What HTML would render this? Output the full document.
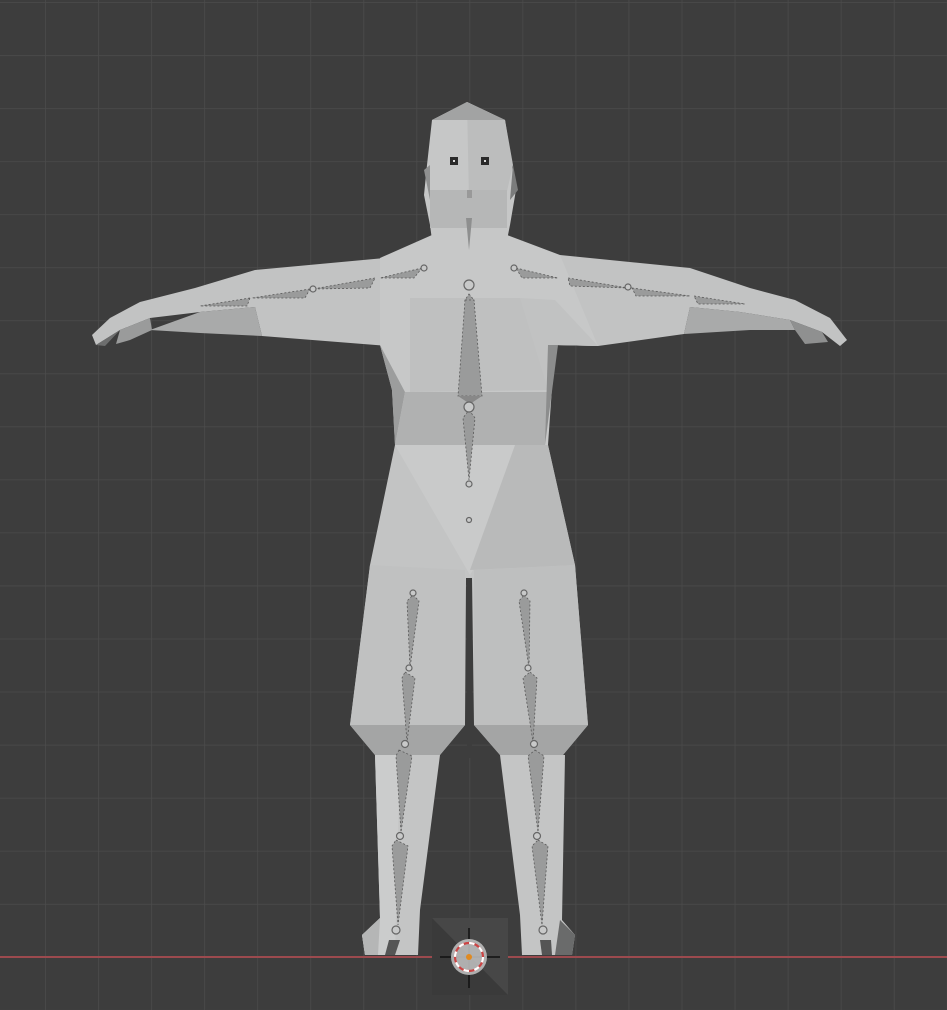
<!DOCTYPE html>
<html><head><style>
html,body{margin:0;padding:0;background:#3d3d3d;overflow:hidden}
svg{display:block}
</style></head><body>
<svg width="947" height="1010" viewBox="0 0 947 1010" xmlns="http://www.w3.org/2000/svg">
<defs>
<pattern id="g" x="45" y="2" width="53.05" height="53.05" patternUnits="userSpaceOnUse">
<path d="M0 0H53.05M0 0V53.05" stroke="#4b4b4b" stroke-width="1.6" fill="none"/>
</pattern>
</defs>
<rect width="947" height="1010" fill="#3d3d3d"/>
<rect width="947" height="1010" fill="url(#g)"/>
<line x1="0" y1="957" x2="947" y2="957" stroke="#9c4a4e" stroke-width="2"/>

<!-- arms -->
<polygon points="385,258 255,270 195,288 140,302 110,318 92,335 96,345 120,330 150,318 200,312 255,307 262,336 388,346" fill="#c2c3c3"/>
<polygon points="200,312 255,307 262,336 200,333 150,330" fill="#a9aaaa"/>
<polygon points="120,330 150,318 152,330 130,340 116,344" fill="#9a9b9b"/>
<polygon points="96,345 120,330 105,346" fill="#6d6e6e"/>
<polygon points="560,255 690,268 750,288 795,300 830,318 847,340 840,346 822,332 790,320 740,312 690,307 684,334 598,346 555,345" fill="#c2c3c3"/>
<polygon points="690,307 740,312 790,320 795,330 750,330 684,334" fill="#a9aaaa"/>
<polygon points="790,320 822,332 828,342 805,344 795,330" fill="#8f9090"/>

<!-- torso -->
<polygon points="380,258 432,235 507,235 560,255 598,346 555,345 548,445 395,445 392,390 380,345" fill="#c7c8c8"/>
<polygon points="410,298 520,298 540,340 548,390 410,392" fill="#bfc0c0"/>
<polygon points="520,298 555,300 598,346 555,345 548,390" fill="#c1c2c2"/>
<polygon points="380,345 392,390 395,445 405,392" fill="#9c9d9d"/>
<polygon points="405,392 548,392 545,445 395,445" fill="#b0b1b1"/>
<polygon points="548,345 558,345 545,445" fill="#8c8d8d"/>

<!-- head -->
<polygon points="467,102 432,120 427,165 424,195 430,225 432,240 507,240 510,225 516,190 505,120" fill="#c6c7c7"/>
<polygon points="467,102 505,120 513,165 505,200 469,200" fill="#bcbdbd"/>
<polygon points="467,102 432,120 505,120" fill="#a2a3a3"/>
<polygon points="430,190 507,190 507,228 430,228" fill="#b6b7b7"/>
<polygon points="424,170 430,165 430,200" fill="#8f9090"/>
<polygon points="513,165 518,190 510,200" fill="#7b7c7c"/>
<rect x="450" y="157" width="8" height="8" fill="#2a2a2a"/><rect x="453" y="160" width="2" height="2" fill="#ddd"/>
<rect x="481" y="157" width="8" height="8" fill="#2a2a2a"/><rect x="484" y="160" width="2" height="2" fill="#ddd"/>

<!-- hips / legs -->
<polygon points="395,445 548,445 575,565 588,725 563,755 500,755 474,725 472,578 466,578 465,725 440,755 375,755 350,725 370,565" fill="#c3c4c4"/>
<polygon points="395,445 548,445 470,575" fill="#c9caca"/>
<polygon points="515,445 548,445 575,565 470,570" fill="#b9baba"/>
<polygon points="370,565 465,570 465,725 350,725" fill="#c0c1c1"/>
<polygon points="474,570 575,565 588,725 474,725" fill="#bebfbf"/>
<polygon points="350,725 465,725 440,755 375,755" fill="#a4a5a5"/>
<polygon points="474,725 588,725 563,755 500,755" fill="#a4a5a5"/>
<rect x="467" y="578" width="5" height="180" fill="#3d3d3d"/>
<!-- lower legs -->
<polygon points="375,755 440,755 420,910 418,955 365,955 362,935 380,918" fill="#c4c5c5"/>
<polygon points="375,755 400,755 395,955 365,955 362,935 380,918" fill="#cbcccc"/>
<polygon points="500,755 565,755 562,920 575,935 572,955 522,955 520,915" fill="#c4c5c5"/>
<polygon points="560,920 575,935 572,955 555,955" fill="#6a6b6b"/>
<polygon points="362,935 380,918 378,955 365,955" fill="#b5b6b6"/>

<!-- bones -->
<g fill="#9a9b9b" stroke="#5a5a5a" stroke-width="0.8" stroke-dasharray="2 2">
<polygon points="469,294 474,300 470,395 465,300"/>
<polygon points="465,300 474,300 482,396 458,396"/>
<polygon points="469,410 475,418 469,480 463,418"/>
<polygon points="413,595 419,601 410,668 407,601"/>
<polygon points="405,672 415,678 407,742 402,678"/>
<polygon points="399,750 412,756 401,832 396,756"/>
<polygon points="396,840 408,846 398,925 392,846"/>
<polygon points="524,595 530,601 529,668 519,601"/>
<polygon points="530,672 537,678 533,742 523,678"/>
<polygon points="535,750 544,756 538,832 528,756"/>
<polygon points="538,840 548,846 542,925 532,846"/>
<polygon points="422,268 380,278 414,278"/>
<polygon points="375,278 313,289 370,288"/>
<polygon points="310,289 252,298 305,298"/>
<polygon points="250,298 200,306 247,306"/>
<polygon points="516,268 558,278 522,278"/>
<polygon points="568,278 628,288 570,286"/>
<polygon points="632,288 690,296 636,296"/>
<polygon points="694,296 745,304 698,304"/>
</g>
<polygon points="458,396 482,396 470,404" fill="#888"/>
<g fill="#c8c9c9" stroke="#666" stroke-width="1.2">
<circle cx="469" cy="285" r="5"/><circle cx="469" cy="407" r="5"/>
<circle cx="469" cy="484" r="3"/><circle cx="469" cy="520" r="2.5"/>
<circle cx="413" cy="593" r="3"/><circle cx="409" cy="668" r="3"/><circle cx="405" cy="744" r="3.5"/><circle cx="400" cy="836" r="3.5"/>
<circle cx="524" cy="593" r="3"/><circle cx="528" cy="668" r="3"/><circle cx="534" cy="744" r="3.5"/><circle cx="537" cy="836" r="3.5"/>
<circle cx="424" cy="268" r="3"/><circle cx="514" cy="268" r="3"/><circle cx="313" cy="289" r="3"/><circle cx="628" cy="287" r="3"/>
<circle cx="396" cy="930" r="4"/><circle cx="543" cy="930" r="4"/>
</g>
<polygon points="389,940 400,940 395,955 385,955" fill="#555"/>
<polygon points="540,940 551,940 552,955 542,955" fill="#555"/>
<rect x="467" y="190" width="5" height="8" fill="#999"/>
<polygon points="466,218 472,218 469,250" fill="#8e8f8f"/>

<!-- origin gizmo -->
<rect x="432" y="918" width="76" height="77" fill="#3a3a3a"/>
<polygon points="432,918 508,918 508,995" fill="#474747"/>
<line x1="440" y1="957" x2="500" y2="957" stroke="#111" stroke-width="1.5"/>
<line x1="469" y1="928" x2="469" y2="988" stroke="#111" stroke-width="1.5"/>
<circle cx="469" cy="957" r="18" fill="#bdbdbd" opacity="0.9"/>
<circle cx="469" cy="957" r="14" fill="none" stroke="#c44" stroke-width="2.2"/>
<circle cx="469" cy="957" r="14" fill="none" stroke="#fff" stroke-width="2.2" stroke-dasharray="5.5 5.5"/>
<circle cx="469" cy="957" r="3" fill="#e08a20"/>
</svg>
</body></html>
